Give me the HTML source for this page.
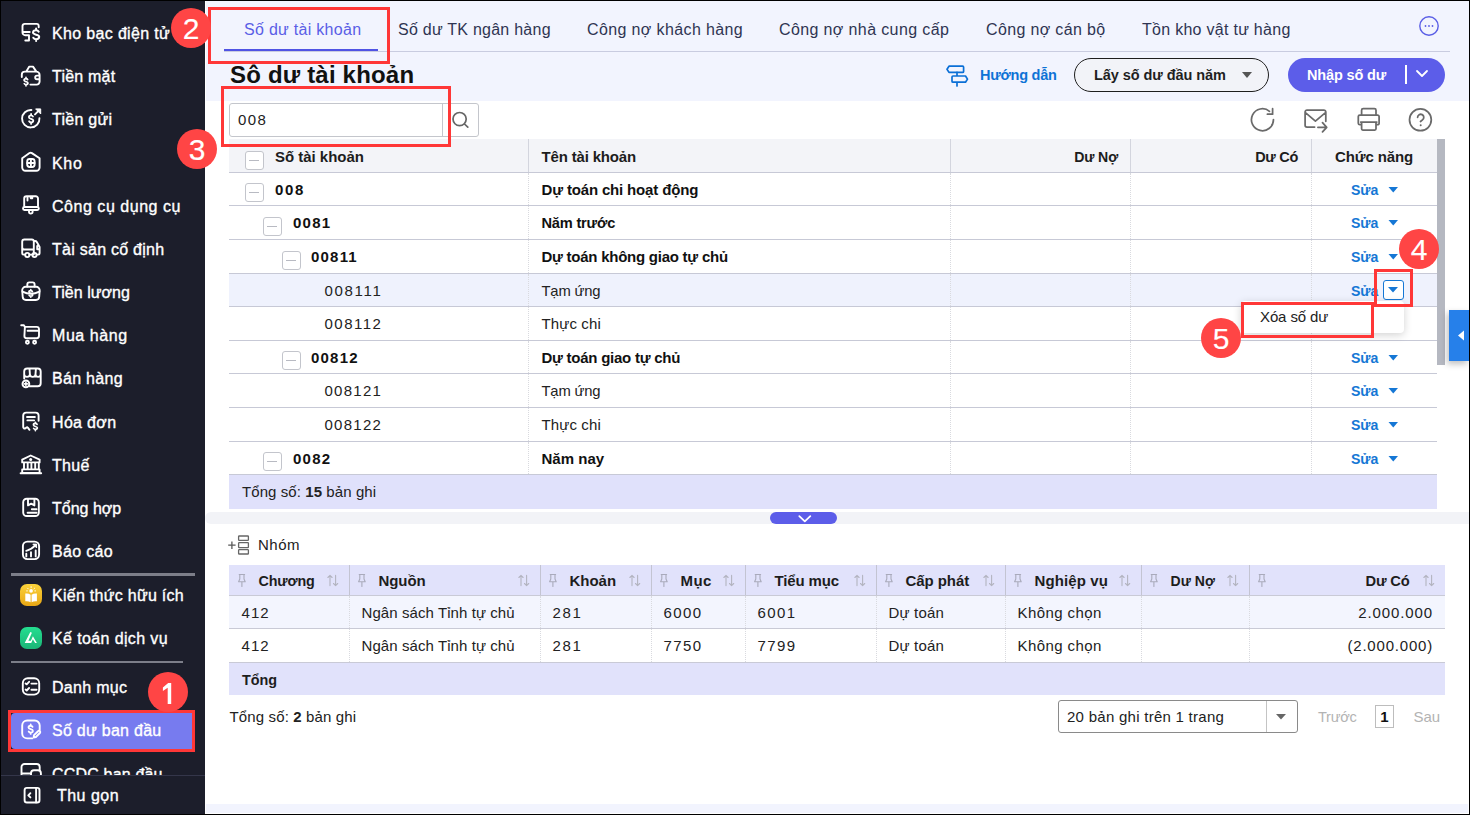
<!DOCTYPE html>
<html><head><meta charset="utf-8"><style>
html,body{margin:0;padding:0;width:1470px;height:815px;overflow:hidden;background:#fff}
body{position:relative;font-family:"Liberation Sans", sans-serif}
body>div,body>svg{position:absolute;box-sizing:content-box}
b{font-weight:700}
</style></head><body>
<div style="left:0px;top:0px;width:1470px;height:815px;background:#fff"></div>
<div style="left:1px;top:1px;width:204px;height:813px;background:#1c1e2b"></div>
<div style="left:206px;top:1px;width:1263px;height:100px;background:#f2f4fe"></div>
<svg style="left:17px;top:18px;" width="28" height="28" viewBox="0 0 28 28" fill="none"><path stroke="#fff" stroke-width="1.9" stroke-linecap="round" stroke-linejoin="round" d="M21.7 9.3V7.9A2 2 0 0 0 19.7 5.9H7.7A2.2 2.2 0 0 0 5.5 8.1V14.5A2.7 2.7 0 0 0 8.2 17.2H12V22.5H8.3M5.5 14H12.7"/><path stroke="#fff" stroke-width="2.0" stroke-linecap="round" stroke-linejoin="round" d="M21.73 13.68C20.96 12.16 19.72 12.16 19.10 12.16C17.09 12.16 16.00 13.17 16.00 14.56C16.00 17.33 22.20 16.07 22.20 18.84C22.20 20.23 21.12 21.24 19.10 21.24C18.48 21.24 17.24 21.24 16.31 19.72M19.10 10.40V12.16M19.10 21.24V23.00"/></svg>
<div style="left:52px;top:24.0px;font-size:16px;line-height:20px;font-weight:400;color:#ffffff;white-space:nowrap;-webkit-text-stroke:0.35px #fff;letter-spacing:0.34px;">Kho bạc điện tử</div>
<svg style="left:17px;top:62px;" width="28" height="28" viewBox="0 0 28 28" fill="none"><path stroke="#fff" stroke-width="1.9" stroke-linecap="round" stroke-linejoin="round" d="M4.8 15V12.6A3 3 0 0 1 7.8 9.6H19.3A3.3 3.3 0 0 1 22.6 12.9V19.6A3 3 0 0 1 19.6 22.6H13.4M9.3 9.4L12.3 4.6H16L19.2 9.4M22.6 13.6H20A1.8 1.8 0 0 0 20 17.2H22.6"/><path stroke="#fff" stroke-width="1.7" stroke-linecap="round" stroke-linejoin="round" d="M10.66 17.58C10.17 16.58 9.39 16.58 9.00 16.58C7.73 16.58 7.05 17.25 7.05 18.17C7.05 20.02 10.95 19.18 10.95 21.03C10.95 21.95 10.27 22.62 9.00 22.62C8.61 22.62 7.83 22.62 7.25 21.62M9.00 15.40V16.58M9.00 22.62V23.80"/></svg>
<div style="left:52px;top:67.2px;font-size:16px;line-height:20px;font-weight:400;color:#ffffff;white-space:nowrap;-webkit-text-stroke:0.35px #fff;letter-spacing:0.21px;">Tiền mặt</div>
<svg style="left:17px;top:105px;" width="28" height="28" viewBox="0 0 28 28" fill="none"><path stroke="#fff" stroke-width="1.9" stroke-linecap="round" stroke-linejoin="round" d="M14.4 5.05A8.7 8.7 0 1 0 22.45 13.1M22 5.4L18 9.4"/><path d="M18.6 3.9H23.7V9Z" fill="#fff" stroke="#fff" stroke-width="1" stroke-linejoin="round"/><path stroke="#fff" stroke-width="1.8" stroke-linecap="round" stroke-linejoin="round" d="M15.97 11.50C15.42 10.30 14.54 10.30 14.10 10.30C12.67 10.30 11.90 11.10 11.90 12.20C11.90 14.40 16.30 13.40 16.30 15.60C16.30 16.70 15.53 17.50 14.10 17.50C13.66 17.50 12.78 17.50 12.12 16.30M14.10 8.90V10.30M14.10 17.50V18.90"/></svg>
<div style="left:52px;top:110.3px;font-size:16px;line-height:20px;font-weight:400;color:#ffffff;white-space:nowrap;-webkit-text-stroke:0.35px #fff;letter-spacing:0.26px;">Tiền gửi</div>
<svg style="left:17px;top:148px;" width="28" height="28" viewBox="0 0 28 28" fill="none"><path stroke="#fff" stroke-width="1.9" stroke-linecap="round" stroke-linejoin="round" d="M5.2 10.3L12.5 5.1A2.1 2.1 0 0 1 14.9 5.1L22.6 10.3V19.6A3.2 3.2 0 0 1 19.4 22.8H8.4A3.2 3.2 0 0 1 5.2 19.6Z"/><rect stroke="#fff" stroke-width="1.9" stroke-linecap="round" stroke-linejoin="round" x="10.2" y="11" width="7.4" height="8" rx="2.4"/><path stroke="#fff" stroke-width="1.9" stroke-linecap="round" stroke-linejoin="round" d="M13.9 11V19M10.2 15H17.6"/></svg>
<div style="left:52px;top:153.5px;font-size:16px;line-height:20px;font-weight:400;color:#ffffff;white-space:nowrap;-webkit-text-stroke:0.35px #fff;letter-spacing:0.70px;">Kho</div>
<svg style="left:17px;top:191px;" width="28" height="28" viewBox="0 0 28 28" fill="none"><path stroke="#fff" stroke-width="1.9" stroke-linecap="round" stroke-linejoin="round" d="M7.2 15V7.5A2.3 2.3 0 0 1 9.5 5.2H18.7A2.3 2.3 0 0 1 21 7.5V15M10.5 5.5V9.6M13.4 5.5L13.8 7.3H15.3V5.5"/><rect stroke="#fff" stroke-width="1.9" stroke-linecap="round" stroke-linejoin="round" x="6" y="16" width="15.8" height="3" rx="1.5"/><path stroke="#fff" stroke-width="1.9" stroke-linecap="round" stroke-linejoin="round" d="M12 19V20.8A1.8 1.8 0 0 0 15.6 20.8V19"/></svg>
<div style="left:52px;top:196.7px;font-size:16px;line-height:20px;font-weight:400;color:#ffffff;white-space:nowrap;-webkit-text-stroke:0.35px #fff;letter-spacing:0.53px;">Công cụ dụng cụ</div>
<svg style="left:17px;top:234px;" width="28" height="28" viewBox="0 0 28 28" fill="none"><path stroke="#fff" stroke-width="1.9" stroke-linecap="round" stroke-linejoin="round" d="M16.8 15.5H7.4A2.2 2.2 0 0 1 5.2 13.3V7.7A2.2 2.2 0 0 1 7.4 5.5H14.8A2 2 0 0 1 16.8 7.5V20.6M5.2 13V19A1.6 1.6 0 0 0 6.8 20.6H8.2M12.4 20.6H15.3M19.6 20.6H21A1.6 1.6 0 0 0 22.6 19V13L19.8 8A2 2 0 0 0 18 7H16.8M20.2 12V15.2H22.6"/><circle stroke="#fff" stroke-width="1.9" stroke-linecap="round" stroke-linejoin="round" cx="10.3" cy="21" r="2.1"/><circle stroke="#fff" stroke-width="1.9" stroke-linecap="round" stroke-linejoin="round" cx="17.5" cy="21" r="2.1"/></svg>
<div style="left:52px;top:239.9px;font-size:16px;line-height:20px;font-weight:400;color:#ffffff;white-space:nowrap;-webkit-text-stroke:0.35px #fff;letter-spacing:0.26px;">Tài sản cố định</div>
<svg style="left:17px;top:277px;" width="28" height="28" viewBox="0 0 28 28" fill="none"><path stroke="#fff" stroke-width="1.9" stroke-linecap="round" stroke-linejoin="round" d="M10.3 9.6V7.4A2 2 0 0 1 12.3 5.4H15.6A2 2 0 0 1 17.6 7.4V9.6"/><path stroke="#fff" stroke-width="1.9" stroke-linecap="round" stroke-linejoin="round" d="M5.2 13.3A3.5 3.5 0 0 1 8.7 9.8H19.2A3.5 3.5 0 0 1 22.7 13.3L22.2 19.8A3.3 3.3 0 0 1 18.9 23H9A3.3 3.3 0 0 1 5.7 19.8Z"/><path stroke="#fff" stroke-width="1.9" stroke-linecap="round" stroke-linejoin="round" d="M5.5 14.7Q13.9 18.9 22.4 14.7"/><path stroke="#fff" stroke-width="1.6" stroke-linecap="round" stroke-linejoin="round" d="M15.42 14.58C14.94 13.66 14.18 13.66 13.80 13.66C12.57 13.66 11.90 14.27 11.90 15.11C11.90 16.78 15.70 16.02 15.70 17.69C15.70 18.53 15.04 19.14 13.80 19.14C13.42 19.14 12.66 19.14 12.09 18.22M13.80 12.60V13.66M13.80 19.14V20.20"/></svg>
<div style="left:52px;top:283.0px;font-size:16px;line-height:20px;font-weight:400;color:#ffffff;white-space:nowrap;-webkit-text-stroke:0.35px #fff;letter-spacing:0.04px;">Tiền lương</div>
<svg style="left:17px;top:320px;" width="28" height="28" viewBox="0 0 28 28" fill="none"><path stroke="#fff" stroke-width="1.9" stroke-linecap="round" stroke-linejoin="round" d="M4.2 5.3H6.9L7.9 6.9H19.6A2.4 2.4 0 0 1 22 9.3V15.8A2.4 2.4 0 0 1 19.6 18.2H9.6A2.2 2.2 0 0 1 7.4 16L7.9 6.9M10.6 10.7H21.8"/><circle stroke="#fff" stroke-width="1.9" stroke-linecap="round" stroke-linejoin="round" cx="10.4" cy="22.3" r="1.5"/><circle stroke="#fff" stroke-width="1.9" stroke-linecap="round" stroke-linejoin="round" cx="17.6" cy="22.3" r="1.5"/></svg>
<div style="left:52px;top:326.2px;font-size:16px;line-height:20px;font-weight:400;color:#ffffff;white-space:nowrap;-webkit-text-stroke:0.35px #fff;letter-spacing:0.57px;">Mua hàng</div>
<svg style="left:17px;top:364px;" width="28" height="28" viewBox="0 0 28 28" fill="none"><path stroke="#fff" stroke-width="1.9" stroke-linecap="round" stroke-linejoin="round" d="M7.2 14.5V7.5A3 3 0 0 1 10.2 4.5H20.7A3 3 0 0 1 23.7 7.5V19.3A3 3 0 0 1 20.7 22.3H12.4M7.2 10.3Q7.2 12.9 10 12.9Q12.9 12.9 12.9 10.3Q12.9 12.9 15.7 12.9Q18.5 12.9 18.5 10.3Q18.5 12.9 21.1 12.9Q23.7 12.9 23.7 10.3M12.9 10.3L12.5 4.6M18.5 10.3L18.9 4.6M7.2 10.3V7.5"/><circle stroke="#fff" stroke-width="1.9" stroke-linecap="round" stroke-linejoin="round" cx="8.9" cy="19.9" r="3.4" fill="#1c1e2b"/><path stroke="#fff" stroke-width="1.6" stroke-linecap="round" d="M8.9 18.4V21.4M7.4 19.9H10.4"/></svg>
<div style="left:52px;top:369.4px;font-size:16px;line-height:20px;font-weight:400;color:#ffffff;white-space:nowrap;-webkit-text-stroke:0.35px #fff;letter-spacing:0.29px;">Bán hàng</div>
<svg style="left:17px;top:407px;" width="28" height="28" viewBox="0 0 28 28" fill="none"><path stroke="#fff" stroke-width="1.9" stroke-linecap="round" stroke-linejoin="round" d="M21.6 13.7V8.6A3 3 0 0 0 18.6 5.6H9.2A3 3 0 0 0 6.2 8.6V20.2A1.5 1.5 0 0 0 8.3 21.4L9.4 20.5A1 1 0 0 1 10.8 20.7L12.5 22.8M10 10H17.9M10.4 13.4H17.1"/><path stroke="#fff" stroke-width="1.7" stroke-linecap="round" stroke-linejoin="round" d="M20.06 17.46C19.57 16.46 18.79 16.46 18.40 16.46C17.13 16.46 16.45 17.13 16.45 18.04C16.45 19.87 20.35 19.04 20.35 20.86C20.35 21.77 19.67 22.44 18.40 22.44C18.01 22.44 17.23 22.44 16.64 21.44M18.40 15.30V16.46M18.40 22.44V23.60"/></svg>
<div style="left:52px;top:412.5px;font-size:16px;line-height:20px;font-weight:400;color:#ffffff;white-space:nowrap;-webkit-text-stroke:0.35px #fff;letter-spacing:0.33px;">Hóa đơn</div>
<svg style="left:17px;top:450px;" width="28" height="28" viewBox="0 0 28 28" fill="none"><path stroke="#fff" stroke-width="1.9" stroke-linecap="round" stroke-linejoin="round" d="M5.2 12.4V9.6L13.7 5.5L22.6 9.6V12.4ZM7 12.4V19.2M10.7 12.4V19.2M14.4 12.4V19.2M18.2 12.4V19.2M21.8 12.4V19.2M5.2 19.4H22.6V22.9H5.2ZM3.6 23.3H24.2"/><circle cx="13.7" cy="9.6" r="1.5" fill="#fff"/></svg>
<div style="left:52px;top:455.7px;font-size:16px;line-height:20px;font-weight:400;color:#ffffff;white-space:nowrap;-webkit-text-stroke:0.35px #fff;letter-spacing:0.33px;">Thuế</div>
<svg style="left:17px;top:493px;" width="28" height="28" viewBox="0 0 28 28" fill="none"><rect stroke="#fff" stroke-width="1.9" stroke-linecap="round" stroke-linejoin="round" x="6.2" y="5.7" width="15.6" height="17.3" rx="3.5"/><path stroke="#fff" stroke-width="1.9" stroke-linecap="round" stroke-linejoin="round" d="M11 5.9V12.4L14.2 10.6L17.4 12.4V5.9M14.8 16.2H19.6M10.6 19.8H19.6"/></svg>
<div style="left:52px;top:498.9px;font-size:16px;line-height:20px;font-weight:400;color:#ffffff;white-space:nowrap;-webkit-text-stroke:0.35px #fff;">Tổng hợp</div>
<svg style="left:17px;top:536px;" width="28" height="28" viewBox="0 0 28 28" fill="none"><rect stroke="#fff" stroke-width="1.9" stroke-linecap="round" stroke-linejoin="round" x="5.9" y="5.6" width="16.2" height="17.5" rx="4.5"/><path stroke="#fff" stroke-width="1.9" stroke-linecap="round" stroke-linejoin="round" d="M9.2 14.8Q14.5 13.5 18.6 9.2M9.3 17.7V20.4M14 16.3V20.4M18.7 14.4V20.4"/><path d="M15.8 8.1H19.6V11.9Z" fill="#fff" stroke="#fff" stroke-width="1" stroke-linejoin="round"/></svg>
<div style="left:52px;top:542.0px;font-size:16px;line-height:20px;font-weight:400;color:#ffffff;white-space:nowrap;-webkit-text-stroke:0.35px #fff;letter-spacing:0.33px;">Báo cáo</div>
<div style="left:11px;top:573px;width:184px;height:3px;background:#7c7e89"></div>
<div style="left:20px;top:584px;width:22px;height:22px;border-radius:7px;background:linear-gradient(#fbd23a,#e8a715)"></div>
<svg style="left:20px;top:584px;" width="22" height="22" viewBox="0 0 22 22" fill="none"><path d="M5.3 9.5Q8.4 9 10.6 10.7V18.3Q8.4 16.8 5.3 17.3Z M11.6 10.7Q13.8 9 16.9 9.5V17.3Q13.8 16.8 11.6 18.3Z" fill="#fff"/><circle cx="11.1" cy="6.9" r="1.8" fill="#fff"/><path d="M11.1 2.6V3.6M7.6 4.2L8.3 4.9M14.6 4.2L13.9 4.9M6.6 6.9H7.4M14.8 6.9H15.6" stroke="#fff" stroke-width=".9" stroke-linecap="round"/></svg>
<div style="left:52px;top:585.7px;font-size:16px;line-height:20px;font-weight:400;color:#ffffff;white-space:nowrap;-webkit-text-stroke:0.35px #fff;letter-spacing:0.28px;">Kiến thức hữu ích</div>
<div style="left:20px;top:627px;width:22px;height:22px;border-radius:7px;background:linear-gradient(#24de90,#1bb577)"></div>
<svg style="left:20px;top:627px;" width="22" height="22" viewBox="0 0 22 22" fill="none"><path d="M10.3 5.1L11.9 5.8L8.4 13.8H10.9L12.9 9.2L16.9 15.9H15.1L12.9 12.3L11.2 15.9H4.7Z" fill="#fff"/></svg>
<div style="left:52px;top:628.9px;font-size:16px;line-height:20px;font-weight:400;color:#ffffff;white-space:nowrap;-webkit-text-stroke:0.35px #fff;letter-spacing:0.38px;">Kế toán dịch vụ</div>
<div style="left:11px;top:661px;width:172px;height:2px;background:#7c7e89"></div>
<svg style="left:17px;top:672px;" width="28" height="28" viewBox="0 0 28 28" fill="none"><rect stroke="#fff" stroke-width="1.9" stroke-linecap="round" stroke-linejoin="round" x="5.8" y="6.2" width="16.4" height="16.4" rx="5"/><path stroke="#fff" stroke-width="1.9" stroke-linecap="round" stroke-linejoin="round" d="M8.6 11.4L9.7 12.3L12.1 9.8M14.4 11.6H19.6M8.6 17.6L9.7 18.5L12.1 16M14.4 17.8H19.6"/></svg>
<div style="left:52px;top:678.1px;font-size:16px;line-height:20px;font-weight:400;color:#ffffff;white-space:nowrap;-webkit-text-stroke:0.35px #fff;letter-spacing:0.29px;">Danh mục</div>
<div style="left:11px;top:713px;width:181px;height:36px;background:#777bef;border-radius:4px 0 0 4px"></div>
<svg style="left:17px;top:715px;" width="28" height="28" viewBox="0 0 28 28" fill="none"><path stroke="#fff" stroke-width="1.9" stroke-linecap="round" stroke-linejoin="round" d="M22.7 15.1V10.5A5 5 0 0 0 17.7 5.5H10.2A5 5 0 0 0 5.2 10.5V18.4A5 5 0 0 0 10.2 23.4H15.1"/><path stroke="#fff" stroke-width="1.9" stroke-linecap="round" stroke-linejoin="round" d="M16.6 22.6L17 20.1L21 16.2A1.3 1.3 0 0 1 22.9 18L18.9 22Z"/><path stroke="#fff" stroke-width="1.8" stroke-linecap="round" stroke-linejoin="round" d="M15.57 11.87C15.02 10.73 14.14 10.73 13.70 10.73C12.27 10.73 11.50 11.49 11.50 12.54C11.50 14.62 15.90 13.68 15.90 15.77C15.90 16.81 15.13 17.57 13.70 17.57C13.26 17.57 12.38 17.57 11.72 16.43M13.70 9.40V10.73M13.70 17.57V18.90"/></svg>
<div style="left:52px;top:721.3px;font-size:16px;line-height:20px;font-weight:400;color:#ffffff;white-space:nowrap;-webkit-text-stroke:0.35px #fff;letter-spacing:0.28px;">Số dư ban đầu</div>
<svg style="left:17px;top:758px;" width="28" height="28" viewBox="0 0 28 28" fill="none"><path stroke="#fff" stroke-width="1.9" stroke-linecap="round" stroke-linejoin="round" d="M22.7 12V9A3 3 0 0 0 19.7 6H7.5A3 3 0 0 0 4.5 9V21M4.5 15.5H14"/><rect stroke="#fff" stroke-width="1.9" stroke-linecap="round" stroke-linejoin="round" x="14" y="12.2" width="9.9" height="12" rx="3"/></svg>
<div style="left:52px;top:764.5px;font-size:16px;line-height:20px;font-weight:400;color:#ffffff;white-space:nowrap;-webkit-text-stroke:0.35px #fff;letter-spacing:0.18px;">CCDC ban đầu</div>
<div style="left:1px;top:775px;width:204px;height:39px;background:#1c1e2b;border-top:1px solid #34364a"></div>
<svg style="left:17px;top:758px;" width="28" height="52" viewBox="0 0 28 52" fill="none"><rect stroke="#fff" stroke-width="1.9" stroke-linecap="round" stroke-linejoin="round" x="7.6" y="29.9" width="14.9" height="14.6" rx="2.3"/><path stroke="#fff" stroke-width="1.9" stroke-linecap="round" stroke-linejoin="round" d="M19.1 30V44.4M13.4 35.2L11.3 37.3L13.4 39.4"/></svg>
<div style="left:57px;top:785.5px;font-size:16px;line-height:20px;font-weight:400;color:#ffffff;white-space:nowrap;-webkit-text-stroke:0.35px #fff;letter-spacing:0.47px;">Thu gọn</div>
<div style="left:224px;top:51px;width:1226px;height:1px;background:#c9cce0"></div>
<div style="left:224px;top:49px;width:154px;height:2px;background:#4f53e4"></div>
<div style="left:244px;top:19.799999999999997px;font-size:16px;line-height:20px;font-weight:400;color:#5a5ee6;white-space:nowrap;letter-spacing:0.29px;">Số dư tài khoản</div>
<div style="left:398px;top:19.799999999999997px;font-size:16px;line-height:20px;font-weight:400;color:#2f3452;white-space:nowrap;letter-spacing:0.25px;">Số dư TK ngân hàng</div>
<div style="left:587px;top:19.799999999999997px;font-size:16px;line-height:20px;font-weight:400;color:#2f3452;white-space:nowrap;letter-spacing:0.38px;">Công nợ khách hàng</div>
<div style="left:779px;top:19.799999999999997px;font-size:16px;line-height:20px;font-weight:400;color:#2f3452;white-space:nowrap;letter-spacing:0.38px;">Công nợ nhà cung cấp</div>
<div style="left:986px;top:19.799999999999997px;font-size:16px;line-height:20px;font-weight:400;color:#2f3452;white-space:nowrap;letter-spacing:0.35px;">Công nợ cán bộ</div>
<div style="left:1142px;top:19.799999999999997px;font-size:16px;line-height:20px;font-weight:400;color:#2f3452;white-space:nowrap;letter-spacing:0.28px;">Tồn kho vật tư hàng</div>
<svg style="left:1419px;top:16px;" width="20" height="20" viewBox="0 0 20 20" fill="none"><circle cx="10" cy="10" r="9.2" stroke="#5a5ee6" stroke-width="1.4"/><circle cx="6.5" cy="10" r=".9" fill="#5a5ee6"/><circle cx="10" cy="10" r=".9" fill="#5a5ee6"/><circle cx="13.5" cy="10" r=".9" fill="#5a5ee6"/></svg>
<div style="left:230px;top:65.0px;font-size:24px;line-height:20px;font-weight:700;color:#111;white-space:nowrap;letter-spacing:0.19px;">Sô dư tài khoản</div>
<svg style="left:946px;top:64px;" width="24" height="24" viewBox="0 0 24 24" fill="none"><path d="M3 2.2h13.6a1 1 0 0 1 1 1v4.2a1 1 0 0 1-1 1H3L1 5.3z" stroke="#0b6fd6" stroke-width="1.7" stroke-linejoin="round"/><path d="M7 12h12.5l2 3.1-2 3.1H7a1 1 0 0 1-1-1v-4.2a1 1 0 0 1 1-1zM11 8.4V12M11 18.2v3.8" stroke="#0b6fd6" stroke-width="1.7" stroke-linejoin="round" stroke-linecap="round"/></svg>
<div style="left:980px;top:65px;font-size:14.5px;line-height:20px;font-weight:700;color:#0e73d6;white-space:nowrap;letter-spacing:-0.25px;">Hướng dẫn</div>
<div style="left:1074px;top:58px;width:193px;height:32px;border:1px solid #1e1e1e;border-radius:17px;background:#f2f3f8"></div>
<div style="left:1094px;top:65px;font-size:14.5px;line-height:20px;font-weight:700;color:#1f1f1f;white-space:nowrap;letter-spacing:-0.06px;">Lấy số dư đầu năm</div>
<svg style="left:1241px;top:71px;" width="12" height="8" viewBox="0 0 12 8" fill="none"><path d="M1 1h10L6 7z" fill="#555"/></svg>
<div style="left:1288px;top:58px;width:157px;height:34px;border-radius:17px;background:#5c5de9"></div>
<div style="left:1307px;top:65px;font-size:14.5px;line-height:20px;font-weight:700;color:#fff;white-space:nowrap;letter-spacing:-0.16px;">Nhập số dư</div>
<div style="left:1405px;top:65px;width:2px;height:19px;background:#fff"></div>
<svg style="left:1415px;top:69px;" width="14" height="10" viewBox="0 0 14 10" fill="none"><path d="M2 2l5 5 5-5" stroke="#fff" stroke-width="1.8" stroke-linecap="round" stroke-linejoin="round"/></svg>
<div style="left:229px;top:103px;width:248px;height:32px;border:1px solid #c4c6cc;border-radius:3px;background:#fff"></div>
<div style="left:442px;top:104px;width:1px;height:32px;background:#c4c6cc"></div>
<div style="left:238px;top:110.2px;font-size:15px;line-height:20px;font-weight:400;color:#222;white-space:nowrap;letter-spacing:1.45px;">008</div>
<svg style="left:451px;top:110px;" width="20" height="20" viewBox="0 0 20 20" fill="none"><circle cx="8.6" cy="9.1" r="6.6" stroke="#666" stroke-width="1.7"/><path d="M13.5 14L16.8 17.2" stroke="#666" stroke-width="1.7" stroke-linecap="round"/></svg>
<svg style="left:1245px;top:102px;" width="90" height="36" viewBox="0 0 90 36" fill="none"><path stroke="#6a6a6a" stroke-width="1.75" stroke-linecap="round" stroke-linejoin="round" d="M28.45 17.6A11 11 0 1 1 24.5 9.3M27.6 6.7V12.2H22.4"/><path stroke="#6a6a6a" stroke-width="1.75" stroke-linecap="round" stroke-linejoin="round" d="M80.8 19.3V9.9A1.9 1.9 0 0 0 78.9 8H62A1.9 1.9 0 0 0 60.1 9.9V23.2A1.9 1.9 0 0 0 62 25.1H69.6M60.4 10.6L70.4 19.2L80.5 10.6M72.9 25.3H81.5M77.5 20.6L81.7 25.3L77.5 29.9"/></svg>
<svg style="left:1350px;top:102px;" width="90" height="36" viewBox="0 0 90 36" fill="none"><path stroke="#6a6a6a" stroke-width="1.75" stroke-linecap="round" stroke-linejoin="round" d="M11.6 12.9V8.2A1.6 1.6 0 0 1 13.2 6.6H24.4A1.6 1.6 0 0 1 26 8.2V12.9M11 22.7H9.8A1.5 1.5 0 0 1 8.3 21.2V14.6A1.5 1.5 0 0 1 9.8 13.1H27.6A1.5 1.5 0 0 1 29.1 14.6V21.2A1.5 1.5 0 0 1 27.6 22.7H26.3M10.7 20H26.8M11.6 20V26.8A1.2 1.2 0 0 0 12.8 28H24.8A1.2 1.2 0 0 0 26 26.8V20"/><circle stroke="#6a6a6a" stroke-width="1.75" stroke-linecap="round" stroke-linejoin="round" cx="70.4" cy="17.8" r="10.9"/><path stroke="#6a6a6a" stroke-width="1.75" stroke-linecap="round" stroke-linejoin="round" d="M67.6 15.3A3.1 3.1 0 1 1 72.5 17.9L70.5 19.5"/><circle cx="70.7" cy="23.3" r="1" fill="#6a6a6a"/></svg>
<div style="left:229px;top:139px;width:1208px;height:33px;background:#f3f4f8"></div>
<div style="left:229px;top:172px;width:1208px;height:1px;background:#c7c9d6"></div>
<div style="left:528px;top:139px;width:1px;height:33px;background:#d3d5de"></div>
<div style="left:950px;top:139px;width:1px;height:33px;background:#d3d5de"></div>
<div style="left:1130px;top:139px;width:1px;height:33px;background:#d3d5de"></div>
<div style="left:1311px;top:139px;width:1px;height:33px;background:#d3d5de"></div>
<div style="left:245px;top:151px;width:17px;height:17px;border:1px solid #c3c5cc;border-radius:3px;background:#fff"></div>
<div style="left:249px;top:160px;width:10px;height:1px;background:#b8bac2"></div>
<div style="left:275px;top:147px;font-size:15px;line-height:20px;font-weight:700;color:#1d1d1d;white-space:nowrap;letter-spacing:-0.02px;">Số tài khoản</div>
<div style="left:541.5px;top:147px;font-size:15px;line-height:20px;font-weight:700;color:#1d1d1d;white-space:nowrap;letter-spacing:-0.17px;">Tên tài khoản</div>
<div style="right:352px;top:147px;font-size:14.1px;line-height:20px;font-weight:700;color:#1d1d1d;white-space:nowrap;letter-spacing:-0.15px;">Dư Nợ</div>
<div style="right:172px;top:147px;font-size:14.5px;line-height:20px;font-weight:700;color:#1d1d1d;white-space:nowrap;letter-spacing:-0.30px;">Dư Có</div>
<div style="left:1074px;width:600px;text-align:center;top:147px;font-size:15px;line-height:20px;font-weight:700;color:#1d1d1d;white-space:nowrap;letter-spacing:-0.12px;">Chức năng</div>
<div style="left:229px;top:205px;width:1208px;height:1px;background:#c7c9d6"></div>
<div style="left:528px;top:173px;width:0;height:32px;border-left:1px dotted #d9dadf"></div>
<div style="left:950px;top:173px;width:0;height:32px;border-left:1px dotted #d9dadf"></div>
<div style="left:1130px;top:173px;width:0;height:32px;border-left:1px dotted #d9dadf"></div>
<div style="left:1311px;top:173px;width:0;height:32px;border-left:1px dotted #d9dadf"></div>
<div style="left:245px;top:183px;width:17px;height:17px;border:1px solid #c3c5cc;border-radius:3px;background:#fff"></div>
<div style="left:249px;top:192px;width:10px;height:1px;background:#b8bac2"></div>
<div style="left:275px;top:179.8px;font-size:15px;line-height:20px;font-weight:700;color:#111;white-space:nowrap;letter-spacing:1.70px;">008</div>
<div style="left:541.5px;top:179.8px;font-size:15px;line-height:20px;font-weight:700;color:#111;white-space:nowrap;letter-spacing:-0.16px;">Dự toán chi hoạt động</div>
<div style="left:1351px;top:179.8px;font-size:14.1px;line-height:20px;font-weight:700;color:#1577d5;white-space:nowrap;letter-spacing:-0.10px;">Sửa</div>
<svg style="left:1387px;top:186px;" width="12" height="8" viewBox="0 0 12 8" fill="none"><path d="M1.5 1h9.5L6.25 6.5z" fill="#1577d5"/></svg>
<div style="left:229px;top:239px;width:1208px;height:1px;background:#c7c9d6"></div>
<div style="left:528px;top:206px;width:0;height:33px;border-left:1px dotted #d9dadf"></div>
<div style="left:950px;top:206px;width:0;height:33px;border-left:1px dotted #d9dadf"></div>
<div style="left:1130px;top:206px;width:0;height:33px;border-left:1px dotted #d9dadf"></div>
<div style="left:1311px;top:206px;width:0;height:33px;border-left:1px dotted #d9dadf"></div>
<div style="left:263px;top:217px;width:17px;height:17px;border:1px solid #c3c5cc;border-radius:3px;background:#fff"></div>
<div style="left:267px;top:226px;width:10px;height:1px;background:#b8bac2"></div>
<div style="left:293px;top:213.3px;font-size:15px;line-height:20px;font-weight:700;color:#111;white-space:nowrap;letter-spacing:1.23px;">0081</div>
<div style="left:541.5px;top:213.3px;font-size:14.6px;line-height:20px;font-weight:700;color:#111;white-space:nowrap;letter-spacing:-0.19px;">Năm trước</div>
<div style="left:1351px;top:213.3px;font-size:14.1px;line-height:20px;font-weight:700;color:#1577d5;white-space:nowrap;letter-spacing:-0.10px;">Sửa</div>
<svg style="left:1387px;top:219px;" width="12" height="8" viewBox="0 0 12 8" fill="none"><path d="M1.5 1h9.5L6.25 6.5z" fill="#1577d5"/></svg>
<div style="left:229px;top:273px;width:1208px;height:1px;background:#c7c9d6"></div>
<div style="left:528px;top:240px;width:0;height:33px;border-left:1px dotted #d9dadf"></div>
<div style="left:950px;top:240px;width:0;height:33px;border-left:1px dotted #d9dadf"></div>
<div style="left:1130px;top:240px;width:0;height:33px;border-left:1px dotted #d9dadf"></div>
<div style="left:1311px;top:240px;width:0;height:33px;border-left:1px dotted #d9dadf"></div>
<div style="left:282px;top:251px;width:17px;height:17px;border:1px solid #c3c5cc;border-radius:3px;background:#fff"></div>
<div style="left:286px;top:260px;width:10px;height:1px;background:#b8bac2"></div>
<div style="left:311px;top:247.3px;font-size:15px;line-height:20px;font-weight:700;color:#111;white-space:nowrap;letter-spacing:1.20px;">00811</div>
<div style="left:541.5px;top:247.3px;font-size:15px;line-height:20px;font-weight:700;color:#111;white-space:nowrap;letter-spacing:-0.25px;">Dự toán không giao tự chủ</div>
<div style="left:1351px;top:247.3px;font-size:14.1px;line-height:20px;font-weight:700;color:#1577d5;white-space:nowrap;letter-spacing:-0.10px;">Sửa</div>
<svg style="left:1387px;top:253px;" width="12" height="8" viewBox="0 0 12 8" fill="none"><path d="M1.5 1h9.5L6.25 6.5z" fill="#1577d5"/></svg>
<div style="left:229px;top:274px;width:1208px;height:32px;background:#eff2fd"></div>
<div style="left:229px;top:306px;width:1208px;height:1px;background:#c7c9d6"></div>
<div style="left:528px;top:274px;width:0;height:32px;border-left:1px dotted #d9dadf"></div>
<div style="left:950px;top:274px;width:0;height:32px;border-left:1px dotted #d9dadf"></div>
<div style="left:1130px;top:274px;width:0;height:32px;border-left:1px dotted #d9dadf"></div>
<div style="left:1311px;top:274px;width:0;height:32px;border-left:1px dotted #d9dadf"></div>
<div style="left:324.5px;top:280.8px;font-size:15px;line-height:20px;font-weight:400;color:#222;white-space:nowrap;letter-spacing:1.68px;">008111</div>
<div style="left:541.5px;top:280.8px;font-size:14.8px;line-height:20px;font-weight:400;color:#222;white-space:nowrap;letter-spacing:-0.18px;">Tạm ứng</div>
<div style="left:1351px;top:280.8px;font-size:14.1px;line-height:20px;font-weight:700;color:#1577d5;white-space:nowrap;letter-spacing:-0.10px;">Sửa</div>
<svg style="left:1387px;top:287px;" width="12" height="8" viewBox="0 0 12 8" fill="none"><path d="M1.5 1h9.5L6.25 6.5z" fill="#1577d5"/></svg>
<div style="left:229px;top:340px;width:1208px;height:1px;background:#c7c9d6"></div>
<div style="left:528px;top:307px;width:0;height:33px;border-left:1px dotted #d9dadf"></div>
<div style="left:950px;top:307px;width:0;height:33px;border-left:1px dotted #d9dadf"></div>
<div style="left:1130px;top:307px;width:0;height:33px;border-left:1px dotted #d9dadf"></div>
<div style="left:1311px;top:307px;width:0;height:33px;border-left:1px dotted #d9dadf"></div>
<div style="left:324.5px;top:314.3px;font-size:15px;line-height:20px;font-weight:400;color:#222;white-space:nowrap;letter-spacing:1.48px;">008112</div>
<div style="left:541.5px;top:314.3px;font-size:15px;line-height:20px;font-weight:400;color:#222;white-space:nowrap;letter-spacing:0.13px;">Thực chi</div>
<div style="left:1351px;top:314.3px;font-size:14.1px;line-height:20px;font-weight:700;color:#1577d5;white-space:nowrap;letter-spacing:-0.10px;">Sửa</div>
<svg style="left:1387px;top:320px;" width="12" height="8" viewBox="0 0 12 8" fill="none"><path d="M1.5 1h9.5L6.25 6.5z" fill="#1577d5"/></svg>
<div style="left:229px;top:373px;width:1208px;height:1px;background:#c7c9d6"></div>
<div style="left:528px;top:341px;width:0;height:32px;border-left:1px dotted #d9dadf"></div>
<div style="left:950px;top:341px;width:0;height:32px;border-left:1px dotted #d9dadf"></div>
<div style="left:1130px;top:341px;width:0;height:32px;border-left:1px dotted #d9dadf"></div>
<div style="left:1311px;top:341px;width:0;height:32px;border-left:1px dotted #d9dadf"></div>
<div style="left:282px;top:351px;width:17px;height:17px;border:1px solid #c3c5cc;border-radius:3px;background:#fff"></div>
<div style="left:286px;top:360px;width:10px;height:1px;background:#b8bac2"></div>
<div style="left:311px;top:347.8px;font-size:15px;line-height:20px;font-weight:700;color:#111;white-space:nowrap;letter-spacing:1.20px;">00812</div>
<div style="left:541.5px;top:347.8px;font-size:15px;line-height:20px;font-weight:700;color:#111;white-space:nowrap;letter-spacing:-0.25px;">Dự toán giao tự chủ</div>
<div style="left:1351px;top:347.8px;font-size:14.1px;line-height:20px;font-weight:700;color:#1577d5;white-space:nowrap;letter-spacing:-0.10px;">Sửa</div>
<svg style="left:1387px;top:354px;" width="12" height="8" viewBox="0 0 12 8" fill="none"><path d="M1.5 1h9.5L6.25 6.5z" fill="#1577d5"/></svg>
<div style="left:229px;top:407px;width:1208px;height:1px;background:#c7c9d6"></div>
<div style="left:528px;top:374px;width:0;height:33px;border-left:1px dotted #d9dadf"></div>
<div style="left:950px;top:374px;width:0;height:33px;border-left:1px dotted #d9dadf"></div>
<div style="left:1130px;top:374px;width:0;height:33px;border-left:1px dotted #d9dadf"></div>
<div style="left:1311px;top:374px;width:0;height:33px;border-left:1px dotted #d9dadf"></div>
<div style="left:324.5px;top:381.3px;font-size:15px;line-height:20px;font-weight:400;color:#222;white-space:nowrap;letter-spacing:1.28px;">008121</div>
<div style="left:541.5px;top:381.3px;font-size:14.8px;line-height:20px;font-weight:400;color:#222;white-space:nowrap;letter-spacing:-0.18px;">Tạm ứng</div>
<div style="left:1351px;top:381.3px;font-size:14.1px;line-height:20px;font-weight:700;color:#1577d5;white-space:nowrap;letter-spacing:-0.10px;">Sửa</div>
<svg style="left:1387px;top:387px;" width="12" height="8" viewBox="0 0 12 8" fill="none"><path d="M1.5 1h9.5L6.25 6.5z" fill="#1577d5"/></svg>
<div style="left:229px;top:441px;width:1208px;height:1px;background:#c7c9d6"></div>
<div style="left:528px;top:408px;width:0;height:33px;border-left:1px dotted #d9dadf"></div>
<div style="left:950px;top:408px;width:0;height:33px;border-left:1px dotted #d9dadf"></div>
<div style="left:1130px;top:408px;width:0;height:33px;border-left:1px dotted #d9dadf"></div>
<div style="left:1311px;top:408px;width:0;height:33px;border-left:1px dotted #d9dadf"></div>
<div style="left:324.5px;top:415.3px;font-size:15px;line-height:20px;font-weight:400;color:#222;white-space:nowrap;letter-spacing:1.28px;">008122</div>
<div style="left:541.5px;top:415.3px;font-size:15px;line-height:20px;font-weight:400;color:#222;white-space:nowrap;letter-spacing:0.13px;">Thực chi</div>
<div style="left:1351px;top:415.3px;font-size:14.1px;line-height:20px;font-weight:700;color:#1577d5;white-space:nowrap;letter-spacing:-0.10px;">Sửa</div>
<svg style="left:1387px;top:421px;" width="12" height="8" viewBox="0 0 12 8" fill="none"><path d="M1.5 1h9.5L6.25 6.5z" fill="#1577d5"/></svg>
<div style="left:229px;top:474px;width:1208px;height:1px;background:#c7c9d6"></div>
<div style="left:528px;top:442px;width:0;height:32px;border-left:1px dotted #d9dadf"></div>
<div style="left:950px;top:442px;width:0;height:32px;border-left:1px dotted #d9dadf"></div>
<div style="left:1130px;top:442px;width:0;height:32px;border-left:1px dotted #d9dadf"></div>
<div style="left:1311px;top:442px;width:0;height:32px;border-left:1px dotted #d9dadf"></div>
<div style="left:263px;top:452px;width:17px;height:17px;border:1px solid #c3c5cc;border-radius:3px;background:#fff"></div>
<div style="left:267px;top:461px;width:10px;height:1px;background:#b8bac2"></div>
<div style="left:293px;top:448.8px;font-size:15px;line-height:20px;font-weight:700;color:#111;white-space:nowrap;letter-spacing:1.23px;">0082</div>
<div style="left:541.5px;top:448.8px;font-size:15px;line-height:20px;font-weight:700;color:#111;white-space:nowrap;letter-spacing:0.02px;">Năm nay</div>
<div style="left:1351px;top:448.8px;font-size:14.1px;line-height:20px;font-weight:700;color:#1577d5;white-space:nowrap;letter-spacing:-0.10px;">Sửa</div>
<svg style="left:1387px;top:455px;" width="12" height="8" viewBox="0 0 12 8" fill="none"><path d="M1.5 1h9.5L6.25 6.5z" fill="#1577d5"/></svg>
<div style="left:1383px;top:280px;width:19px;height:18px;border:1px solid #1577d5;border-radius:3px;background:#fff"></div>
<svg style="left:1387px;top:286px;" width="12" height="8" viewBox="0 0 12 8" fill="none"><path d="M1 1h10L6 6.5z" fill="#1577d5"/></svg>
<div style="left:229px;top:475px;width:1208px;height:34px;background:#e0e1fb"></div>
<div style="left:242px;top:482px;font-size:15px;line-height:20px;font-weight:400;color:#222;white-space:nowrap;letter-spacing:0.08px;">Tổng số: <b>15</b> bản ghi</div>
<div style="left:1437px;top:139px;width:8px;height:226px;background:#b5b8c1"></div>
<div style="left:1449px;top:310px;width:20px;height:51px;background:#2680ea;box-shadow:-2px 3px 6px rgba(0,0,0,.25)"></div>
<svg style="left:1457px;top:330px;" width="8" height="11" viewBox="0 0 8 11" fill="none"><path d="M7 0.5v10L1 5.5z" fill="#fff"/></svg>
<div style="left:1241px;top:301px;width:163px;height:32px;background:#fff;border-radius:4px;box-shadow:0 2px 8px rgba(0,0,0,.18)"></div>
<div style="left:1260px;top:307px;font-size:15px;line-height:20px;font-weight:400;color:#222;white-space:nowrap;letter-spacing:-0.12px;">Xóa số dư</div>
<div style="left:205px;top:512px;width:1264px;height:12px;background:#f2f3f7;border-radius:6px 0 0 6px"></div>
<div style="left:770px;top:512px;width:67px;height:12px;background:#5c5de9;border-radius:6px"></div>
<svg style="left:797px;top:513px;" width="16" height="10" viewBox="0 0 16 10" fill="none"><path d="M2.3 3.2L7.8 8.3L13.3 3.2" stroke="#fff" stroke-width="1.8" stroke-linecap="round" stroke-linejoin="round"/></svg>
<svg style="left:227px;top:534px;" width="24" height="22" viewBox="0 0 24 22" fill="none"><path d="M1.2 11.2H8.6M4.9 7.5V14.9" stroke="#5a5a5a" stroke-width="1.3"/><rect x="11.6" y="2" width="9.8" height="4.4" rx=".6" stroke="#666" stroke-width="1.3"/><rect x="11.6" y="8.6" width="9.8" height="5" rx=".6" stroke="#666" stroke-width="1.3"/><rect x="11.6" y="15.6" width="9.8" height="4.4" rx=".6" stroke="#666" stroke-width="1.3"/></svg>
<div style="left:258px;top:534.9px;font-size:15px;line-height:20px;font-weight:400;color:#222;white-space:nowrap;letter-spacing:0.53px;">Nhóm</div>
<div style="left:229px;top:565px;width:1216px;height:30px;background:#e1e2fb"></div>
<div style="left:229px;top:595px;width:1216px;height:1px;background:#c9cad6"></div>
<svg style="left:237px;top:573px;" width="10" height="15" viewBox="0 0 10 15" fill="none"><path d="M2.2 1.5H7.6M2.8 1.5V6L1.6 8.8H8.2L7 6V1.5M4.9 8.8V13.4" stroke="#a9aabb" stroke-width="1.1" stroke-linecap="round" stroke-linejoin="round"/></svg>
<svg style="left:327px;top:574px;" width="12" height="13" viewBox="0 0 12 13" fill="none"><path d="M3 1.4V11.6M0.9 3.5L3 1.4L5.1 3.5M8.6 1.4V11.6M6.5 9.5L8.6 11.6L10.7 9.5" stroke="#b3b4c0" stroke-width="1.1" stroke-linecap="round" stroke-linejoin="round"/></svg>
<div style="left:258.5px;top:571px;font-size:14.3px;line-height:20px;font-weight:700;color:#1d1d1d;white-space:nowrap;letter-spacing:-0.16px;">Chương</div>
<div style="left:349px;top:565px;width:1px;height:30px;background:#c3c4d2"></div>
<svg style="left:357px;top:573px;" width="10" height="15" viewBox="0 0 10 15" fill="none"><path d="M2.2 1.5H7.6M2.8 1.5V6L1.6 8.8H8.2L7 6V1.5M4.9 8.8V13.4" stroke="#a9aabb" stroke-width="1.1" stroke-linecap="round" stroke-linejoin="round"/></svg>
<svg style="left:518px;top:574px;" width="12" height="13" viewBox="0 0 12 13" fill="none"><path d="M3 1.4V11.6M0.9 3.5L3 1.4L5.1 3.5M8.6 1.4V11.6M6.5 9.5L8.6 11.6L10.7 9.5" stroke="#b3b4c0" stroke-width="1.1" stroke-linecap="round" stroke-linejoin="round"/></svg>
<div style="left:378.5px;top:571px;font-size:15px;line-height:20px;font-weight:700;color:#1d1d1d;white-space:nowrap;letter-spacing:-0.07px;">Nguồn</div>
<div style="left:540px;top:565px;width:1px;height:30px;background:#c3c4d2"></div>
<svg style="left:548px;top:573px;" width="10" height="15" viewBox="0 0 10 15" fill="none"><path d="M2.2 1.5H7.6M2.8 1.5V6L1.6 8.8H8.2L7 6V1.5M4.9 8.8V13.4" stroke="#a9aabb" stroke-width="1.1" stroke-linecap="round" stroke-linejoin="round"/></svg>
<svg style="left:629px;top:574px;" width="12" height="13" viewBox="0 0 12 13" fill="none"><path d="M3 1.4V11.6M0.9 3.5L3 1.4L5.1 3.5M8.6 1.4V11.6M6.5 9.5L8.6 11.6L10.7 9.5" stroke="#b3b4c0" stroke-width="1.1" stroke-linecap="round" stroke-linejoin="round"/></svg>
<div style="left:569.5px;top:571px;font-size:15px;line-height:20px;font-weight:700;color:#1d1d1d;white-space:nowrap;letter-spacing:-0.03px;">Khoản</div>
<div style="left:651px;top:565px;width:1px;height:30px;background:#c3c4d2"></div>
<svg style="left:659px;top:573px;" width="10" height="15" viewBox="0 0 10 15" fill="none"><path d="M2.2 1.5H7.6M2.8 1.5V6L1.6 8.8H8.2L7 6V1.5M4.9 8.8V13.4" stroke="#a9aabb" stroke-width="1.1" stroke-linecap="round" stroke-linejoin="round"/></svg>
<svg style="left:723px;top:574px;" width="12" height="13" viewBox="0 0 12 13" fill="none"><path d="M3 1.4V11.6M0.9 3.5L3 1.4L5.1 3.5M8.6 1.4V11.6M6.5 9.5L8.6 11.6L10.7 9.5" stroke="#b3b4c0" stroke-width="1.1" stroke-linecap="round" stroke-linejoin="round"/></svg>
<div style="left:680.5px;top:571px;font-size:15px;line-height:20px;font-weight:700;color:#1d1d1d;white-space:nowrap;letter-spacing:0.45px;">Mục</div>
<div style="left:745px;top:565px;width:1px;height:30px;background:#c3c4d2"></div>
<svg style="left:753px;top:573px;" width="10" height="15" viewBox="0 0 10 15" fill="none"><path d="M2.2 1.5H7.6M2.8 1.5V6L1.6 8.8H8.2L7 6V1.5M4.9 8.8V13.4" stroke="#a9aabb" stroke-width="1.1" stroke-linecap="round" stroke-linejoin="round"/></svg>
<svg style="left:854px;top:574px;" width="12" height="13" viewBox="0 0 12 13" fill="none"><path d="M3 1.4V11.6M0.9 3.5L3 1.4L5.1 3.5M8.6 1.4V11.6M6.5 9.5L8.6 11.6L10.7 9.5" stroke="#b3b4c0" stroke-width="1.1" stroke-linecap="round" stroke-linejoin="round"/></svg>
<div style="left:774.5px;top:571px;font-size:15px;line-height:20px;font-weight:700;color:#1d1d1d;white-space:nowrap;letter-spacing:-0.14px;">Tiểu mục</div>
<div style="left:876px;top:565px;width:1px;height:30px;background:#c3c4d2"></div>
<svg style="left:884px;top:573px;" width="10" height="15" viewBox="0 0 10 15" fill="none"><path d="M2.2 1.5H7.6M2.8 1.5V6L1.6 8.8H8.2L7 6V1.5M4.9 8.8V13.4" stroke="#a9aabb" stroke-width="1.1" stroke-linecap="round" stroke-linejoin="round"/></svg>
<svg style="left:983px;top:574px;" width="12" height="13" viewBox="0 0 12 13" fill="none"><path d="M3 1.4V11.6M0.9 3.5L3 1.4L5.1 3.5M8.6 1.4V11.6M6.5 9.5L8.6 11.6L10.7 9.5" stroke="#b3b4c0" stroke-width="1.1" stroke-linecap="round" stroke-linejoin="round"/></svg>
<div style="left:905.5px;top:571px;font-size:15px;line-height:20px;font-weight:700;color:#1d1d1d;white-space:nowrap;letter-spacing:-0.06px;">Cấp phát</div>
<div style="left:1005px;top:565px;width:1px;height:30px;background:#c3c4d2"></div>
<svg style="left:1013px;top:573px;" width="10" height="15" viewBox="0 0 10 15" fill="none"><path d="M2.2 1.5H7.6M2.8 1.5V6L1.6 8.8H8.2L7 6V1.5M4.9 8.8V13.4" stroke="#a9aabb" stroke-width="1.1" stroke-linecap="round" stroke-linejoin="round"/></svg>
<svg style="left:1119px;top:574px;" width="12" height="13" viewBox="0 0 12 13" fill="none"><path d="M3 1.4V11.6M0.9 3.5L3 1.4L5.1 3.5M8.6 1.4V11.6M6.5 9.5L8.6 11.6L10.7 9.5" stroke="#b3b4c0" stroke-width="1.1" stroke-linecap="round" stroke-linejoin="round"/></svg>
<div style="left:1034.5px;top:571px;font-size:15px;line-height:20px;font-weight:700;color:#1d1d1d;white-space:nowrap;letter-spacing:0.12px;">Nghiệp vụ</div>
<div style="left:1141px;top:565px;width:1px;height:30px;background:#c3c4d2"></div>
<svg style="left:1149px;top:573px;" width="10" height="15" viewBox="0 0 10 15" fill="none"><path d="M2.2 1.5H7.6M2.8 1.5V6L1.6 8.8H8.2L7 6V1.5M4.9 8.8V13.4" stroke="#a9aabb" stroke-width="1.1" stroke-linecap="round" stroke-linejoin="round"/></svg>
<svg style="left:1227px;top:574px;" width="12" height="13" viewBox="0 0 12 13" fill="none"><path d="M3 1.4V11.6M0.9 3.5L3 1.4L5.1 3.5M8.6 1.4V11.6M6.5 9.5L8.6 11.6L10.7 9.5" stroke="#b3b4c0" stroke-width="1.1" stroke-linecap="round" stroke-linejoin="round"/></svg>
<div style="left:1170.5px;top:571px;font-size:14.0px;line-height:20px;font-weight:700;color:#1d1d1d;white-space:nowrap;letter-spacing:0.05px;">Dư Nợ</div>
<div style="left:1249px;top:565px;width:1px;height:30px;background:#c3c4d2"></div>
<svg style="left:1257px;top:573px;" width="10" height="15" viewBox="0 0 10 15" fill="none"><path d="M2.2 1.5H7.6M2.8 1.5V6L1.6 8.8H8.2L7 6V1.5M4.9 8.8V13.4" stroke="#a9aabb" stroke-width="1.1" stroke-linecap="round" stroke-linejoin="round"/></svg>
<svg style="left:1423px;top:574px;" width="12" height="13" viewBox="0 0 12 13" fill="none"><path d="M3 1.4V11.6M0.9 3.5L3 1.4L5.1 3.5M8.6 1.4V11.6M6.5 9.5L8.6 11.6L10.7 9.5" stroke="#b3b4c0" stroke-width="1.1" stroke-linecap="round" stroke-linejoin="round"/></svg>
<div style="right:60.5px;top:571px;font-size:14.7px;line-height:20px;font-weight:700;color:#1d1d1d;white-space:nowrap;letter-spacing:-0.18px;">Dư Có</div>
<div style="left:229px;top:596px;width:1216px;height:32px;background:#f3f5fe"></div>
<div style="left:229px;top:628px;width:1216px;height:1px;background:#c9cad6"></div>
<div style="left:349px;top:596px;width:0;height:32px;border-left:1px dotted #d9dadf"></div>
<div style="left:540px;top:596px;width:0;height:32px;border-left:1px dotted #d9dadf"></div>
<div style="left:651px;top:596px;width:0;height:32px;border-left:1px dotted #d9dadf"></div>
<div style="left:745px;top:596px;width:0;height:32px;border-left:1px dotted #d9dadf"></div>
<div style="left:876px;top:596px;width:0;height:32px;border-left:1px dotted #d9dadf"></div>
<div style="left:1005px;top:596px;width:0;height:32px;border-left:1px dotted #d9dadf"></div>
<div style="left:1141px;top:596px;width:0;height:32px;border-left:1px dotted #d9dadf"></div>
<div style="left:1249px;top:596px;width:0;height:32px;border-left:1px dotted #d9dadf"></div>
<div style="left:241.5px;top:602.8px;font-size:15px;line-height:20px;font-weight:400;color:#222;white-space:nowrap;letter-spacing:1.05px;">412</div>
<div style="left:361.5px;top:602.8px;font-size:15px;line-height:20px;font-weight:400;color:#222;white-space:nowrap;letter-spacing:0.08px;">Ngân sách Tỉnh tự chủ</div>
<div style="left:552.5px;top:602.8px;font-size:15px;line-height:20px;font-weight:400;color:#222;white-space:nowrap;letter-spacing:1.60px;">281</div>
<div style="left:663.5px;top:602.8px;font-size:15px;line-height:20px;font-weight:400;color:#222;white-space:nowrap;letter-spacing:1.37px;">6000</div>
<div style="left:757.5px;top:602.8px;font-size:15px;line-height:20px;font-weight:400;color:#222;white-space:nowrap;letter-spacing:1.40px;">6001</div>
<div style="left:888.5px;top:602.8px;font-size:15px;line-height:20px;font-weight:400;color:#222;white-space:nowrap;letter-spacing:0.17px;">Dự toán</div>
<div style="left:1017.5px;top:602.8px;font-size:15px;line-height:20px;font-weight:400;color:#222;white-space:nowrap;letter-spacing:0.43px;">Không chọn</div>
<div style="right:37px;top:602.8px;font-size:15px;line-height:20px;font-weight:400;color:#222;white-space:nowrap;letter-spacing:0.88px;">2.000.000</div>
<div style="left:229px;top:662px;width:1216px;height:1px;background:#c9cad6"></div>
<div style="left:349px;top:629px;width:0;height:33px;border-left:1px dotted #d9dadf"></div>
<div style="left:540px;top:629px;width:0;height:33px;border-left:1px dotted #d9dadf"></div>
<div style="left:651px;top:629px;width:0;height:33px;border-left:1px dotted #d9dadf"></div>
<div style="left:745px;top:629px;width:0;height:33px;border-left:1px dotted #d9dadf"></div>
<div style="left:876px;top:629px;width:0;height:33px;border-left:1px dotted #d9dadf"></div>
<div style="left:1005px;top:629px;width:0;height:33px;border-left:1px dotted #d9dadf"></div>
<div style="left:1141px;top:629px;width:0;height:33px;border-left:1px dotted #d9dadf"></div>
<div style="left:1249px;top:629px;width:0;height:33px;border-left:1px dotted #d9dadf"></div>
<div style="left:241.5px;top:635.8px;font-size:15px;line-height:20px;font-weight:400;color:#222;white-space:nowrap;letter-spacing:1.05px;">412</div>
<div style="left:361.5px;top:635.8px;font-size:15px;line-height:20px;font-weight:400;color:#222;white-space:nowrap;letter-spacing:0.08px;">Ngân sách Tỉnh tự chủ</div>
<div style="left:552.5px;top:635.8px;font-size:15px;line-height:20px;font-weight:400;color:#222;white-space:nowrap;letter-spacing:1.60px;">281</div>
<div style="left:663.5px;top:635.8px;font-size:15px;line-height:20px;font-weight:400;color:#222;white-space:nowrap;letter-spacing:1.37px;">7750</div>
<div style="left:757.5px;top:635.8px;font-size:15px;line-height:20px;font-weight:400;color:#222;white-space:nowrap;letter-spacing:1.40px;">7799</div>
<div style="left:888.5px;top:635.8px;font-size:15px;line-height:20px;font-weight:400;color:#222;white-space:nowrap;letter-spacing:0.17px;">Dự toán</div>
<div style="left:1017.5px;top:635.8px;font-size:15px;line-height:20px;font-weight:400;color:#222;white-space:nowrap;letter-spacing:0.43px;">Không chọn</div>
<div style="right:37px;top:635.8px;font-size:15px;line-height:20px;font-weight:400;color:#222;white-space:nowrap;letter-spacing:0.80px;">(2.000.000)</div>
<div style="left:229px;top:663px;width:1216px;height:32px;background:#e1e2fb"></div>
<div style="left:242px;top:670px;font-size:14.4px;line-height:20px;font-weight:700;color:#1d1d1d;white-space:nowrap;">Tổng</div>
<div style="left:229.5px;top:707px;font-size:15px;line-height:20px;font-weight:400;color:#222;white-space:nowrap;letter-spacing:0.14px;">Tổng số: <b>2</b> bản ghi</div>
<div style="left:1058px;top:700px;width:238px;height:31px;border:1px solid #8a8a8a;border-radius:3px;background:#fff"></div>
<div style="left:1266px;top:701px;width:1px;height:31px;background:#c4c4c4"></div>
<div style="left:1067px;top:707px;font-size:15px;line-height:20px;font-weight:400;color:#222;white-space:nowrap;letter-spacing:0.27px;">20 bản ghi trên 1 trang</div>
<svg style="left:1275px;top:713px;" width="12" height="8" viewBox="0 0 12 8" fill="none"><path d="M1 1h10L6 6.5z" fill="#666"/></svg>
<div style="left:1318px;top:707px;font-size:14.6px;line-height:20px;font-weight:400;color:#b3b3b3;white-space:nowrap;letter-spacing:-0.25px;">Trước</div>
<div style="left:1375px;top:705px;width:17px;height:21px;border:1px solid #bdbdbd"></div>
<div style="left:1084.5px;width:600px;text-align:center;top:707px;font-size:15px;line-height:20px;font-weight:700;color:#111;white-space:nowrap;">1</div>
<div style="left:1413.5px;top:707px;font-size:15px;line-height:20px;font-weight:400;color:#b3b3b3;white-space:nowrap;letter-spacing:-0.10px;">Sau</div>
<div style="left:206px;top:804px;width:1262px;height:9px;background:#f2f4fe"></div>
<div style="left:208px;top:7px;width:176px;height:51px;border:3px solid #ff3737"></div>
<div style="left:221px;top:86px;width:224px;height:55px;border:3px solid #ff3737"></div>
<div style="left:1374px;top:269px;width:33px;height:32px;border:3px solid #ff3737"></div>
<div style="left:1241px;top:302px;width:127px;height:30px;border:3px solid #ff3737"></div>
<div style="left:8px;top:710px;width:181px;height:36px;border:3px solid #ff3737"></div>
<div style="left:171px;top:8px;width:40px;height:40px;border-radius:50%;background:#ff4545;color:#fff;font-size:30px;line-height:41px;text-align:center;-webkit-text-stroke:0.15px #fff">2</div>
<div style="left:177px;top:129px;width:40px;height:40px;border-radius:50%;background:#ff4545;color:#fff;font-size:30px;line-height:41px;text-align:center;-webkit-text-stroke:0.15px #fff">3</div>
<div style="left:1399px;top:229px;width:40px;height:40px;border-radius:50%;background:#ff4545;color:#fff;font-size:30px;line-height:41px;text-align:center;-webkit-text-stroke:0.15px #fff">4</div>
<div style="left:1201px;top:318px;width:40px;height:40px;border-radius:50%;background:#ff4545;color:#fff;font-size:30px;line-height:41px;text-align:center;-webkit-text-stroke:0.15px #fff">5</div>
<div style="left:147.5px;top:671.5px;width:40px;height:40px;border-radius:50%;background:#ff4545;color:#fff;font-size:30px;line-height:41px;text-align:center;-webkit-text-stroke:0.15px #fff"></div>
<svg style="left:160px;top:680px;" width="14" height="26" viewBox="0 0 14 26" fill="none"><path d="M7.7 3H11.2V24H7.7V7.7L2.9 10.9V7.6L8.2 3Z" fill="#fff"/></svg>
<div style="left:0;top:0;width:1468px;height:813px;border:1px solid #000"></div>
</body></html>
